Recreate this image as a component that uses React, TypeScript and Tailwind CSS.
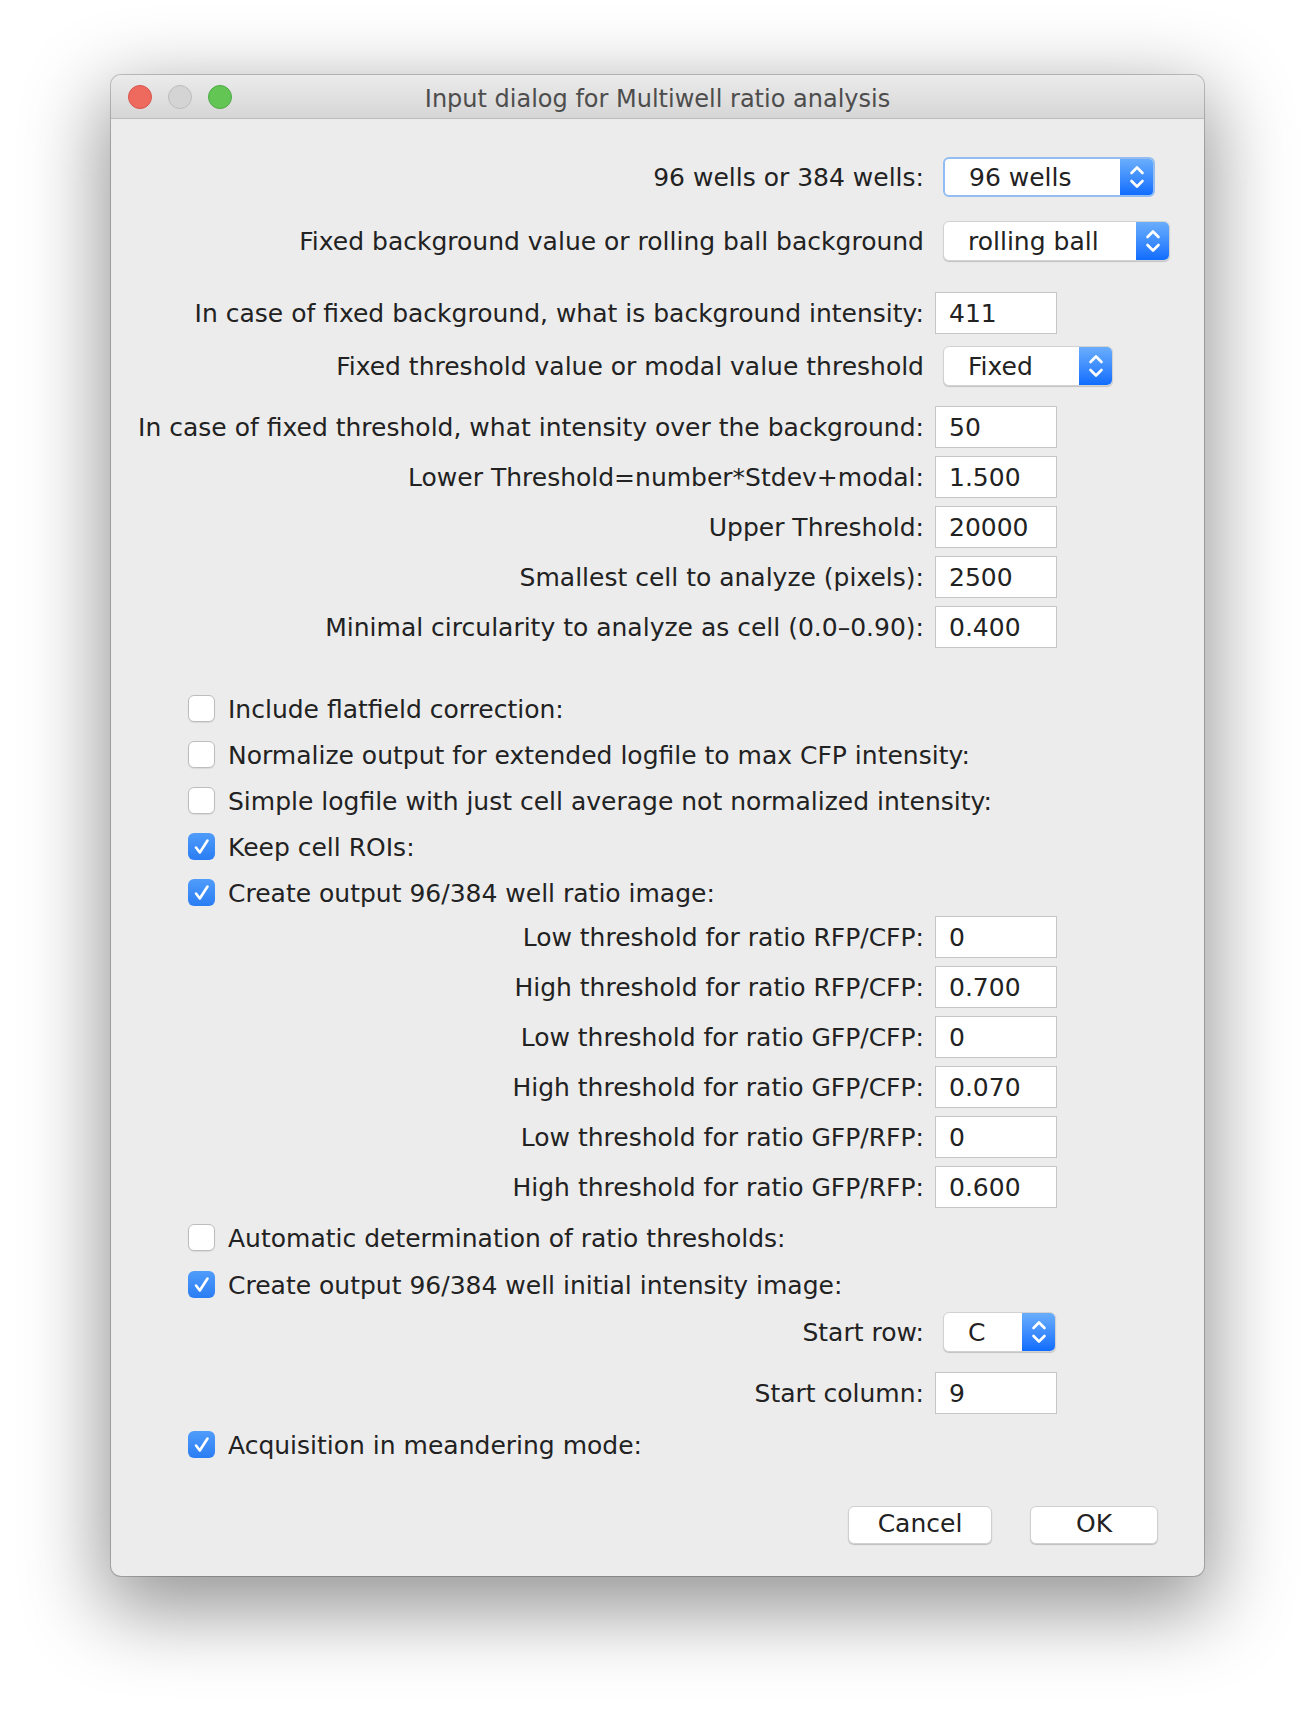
import React from "react";

const font = "font-['DejaVu_Sans',sans-serif]";

function Chevrons() {
  return (
    <svg width="16" height="28" viewBox="0 0 16 28" fill="none">
      <path d="M2.5 10 L8 4.5 L13.5 10" stroke="#fff" strokeWidth="2.6" strokeLinecap="round" strokeLinejoin="round" />
      <path d="M2.5 18 L8 23.5 L13.5 18" stroke="#fff" strokeWidth="2.6" strokeLinecap="round" strokeLinejoin="round" />
    </svg>
  );
}

function Select({ value, width, focused }: { value: string; width: string; focused?: boolean }) {
  return (
    <div
      className={`ml-[8px] flex h-[40px] ${width} items-stretch overflow-hidden rounded-[6px] bg-white ${
        focused
          ? "border-2 border-[#93bcf3]"
          : "border border-[#d2d2d2] shadow-[0_1px_1px_rgba(0,0,0,0.18)]"
      }`}
    >
      <div className="flex flex-1 items-center pl-[24px] pt-[2px] text-[25px] leading-[34px] text-[#222]">{value}</div>
      <div className="flex w-[33px] items-center justify-center bg-gradient-to-b from-[#69adfb] to-[#0d6cff]">
        <Chevrons />
      </div>
    </div>
  );
}

function Field({ value }: { value: string }) {
  return (
    <div className="flex h-[42px] w-[122px] items-center border border-[#c6c6c6] bg-white pl-[13px] pt-[2px] text-[25px] leading-[34px] text-[#222]">
      {value}
    </div>
  );
}

function LabelRow({ label, mt, children }: { label: string; mt: string; children: React.ReactNode }) {
  return (
    <div className={`flex items-center ${mt}`}>
      <div className="w-[824px] whitespace-nowrap pr-[11px] pt-[2px] text-right text-[25px] leading-[34px] text-[#222]">
        {label}
      </div>
      {children}
    </div>
  );
}

function Check({ label, checked, mt }: { label: string; checked?: boolean; mt: string }) {
  return (
    <div className={`flex h-[27px] items-center pl-[77px] ${mt}`}>
      {checked ? (
        <div className="flex h-[27px] w-[27px] items-center justify-center rounded-[6px] bg-gradient-to-b from-[#4f9cfa] to-[#2a7df4]">
          <svg width="27" height="27" viewBox="0 0 27 27" fill="none">
            <path d="M8 14.5 L11.8 19.5 L19.5 7.5" stroke="#fff" strokeWidth="2.6" strokeLinecap="round" strokeLinejoin="round" />
          </svg>
        </div>
      ) : (
        <div className="h-[27px] w-[27px] rounded-[6px] border border-[#bdbdbd] bg-white shadow-[0_1px_1px_rgba(0,0,0,0.08)]" />
      )}
      <div className="ml-[13px] whitespace-nowrap pt-[2px] text-[25px] leading-[34px] text-[#222]">{label}</div>
    </div>
  );
}

export default function App() {
  return (
    <div className={`min-h-[1724px] bg-white pl-[111px] pt-[75px] ${font}`}>
      <div className="flex h-[1501px] w-[1093px] flex-col overflow-hidden rounded-[10px] bg-[#ececec] shadow-[0_0_0_1px_rgba(0,0,0,0.2),0_26px_80px_8px_rgba(0,0,0,0.42)]">
        {/* title bar */}
        <div className="relative flex h-[44px] items-center justify-center border-b border-[#bdbdbd] bg-gradient-to-b from-[#ebebeb] to-[#d6d6d6]">
          <div className="absolute left-[17px] top-[10px] flex gap-[16px]">
            <div className="h-[24px] w-[24px] rounded-full border border-[#d9534b] bg-[#ee6a5f]" />
            <div className="h-[24px] w-[24px] rounded-full border border-[#bcbcbc] bg-[#d4d4d4]" />
            <div className="h-[24px] w-[24px] rounded-full border border-[#4ea944] bg-[#62c554]" />
          </div>
          <div className="pt-[4px] text-[24px] text-[#4d4d4d]">Input dialog for Multiwell ratio analysis</div>
        </div>

        <div className="flex flex-col">
          <LabelRow label="96 wells or 384 wells:" mt="mt-[38px]">
            <Select value="96 wells" width="w-[212px]" focused />
          </LabelRow>
          <LabelRow label="Fixed background value or rolling ball background" mt="mt-[24px]">
            <Select value="rolling ball" width="w-[227px]" />
          </LabelRow>
          <LabelRow label="In case of fixed background, what is background intensity:" mt="mt-[31px]">
            <Field value="411" />
          </LabelRow>
          <LabelRow label="Fixed threshold value or modal value threshold" mt="mt-[12px]">
            <Select value="Fixed" width="w-[170px]" />
          </LabelRow>
          <LabelRow label="In case of fixed threshold, what intensity over the background:" mt="mt-[20px]">
            <Field value="50" />
          </LabelRow>
          <LabelRow label="Lower Threshold=number*Stdev+modal:" mt="mt-[8px]">
            <Field value="1.500" />
          </LabelRow>
          <LabelRow label="Upper Threshold:" mt="mt-[8px]">
            <Field value="20000" />
          </LabelRow>
          <LabelRow label="Smallest cell to analyze (pixels):" mt="mt-[8px]">
            <Field value="2500" />
          </LabelRow>
          <LabelRow label="Minimal circularity to analyze as cell (0.0–0.90):" mt="mt-[8px]">
            <Field value="0.400" />
          </LabelRow>

          <Check label="Include flatfield correction:" mt="mt-[47px]" />
          <Check label="Normalize output for extended logfile to max CFP intensity:" mt="mt-[19px]" />
          <Check label="Simple logfile with just cell average not normalized intensity:" mt="mt-[19px]" />
          <Check label="Keep cell ROIs:" checked mt="mt-[19px]" />
          <Check label="Create output 96/384 well ratio image:" checked mt="mt-[19px]" />

          <LabelRow label="Low threshold for ratio RFP/CFP:" mt="mt-[10px]">
            <Field value="0" />
          </LabelRow>
          <LabelRow label="High threshold for ratio RFP/CFP:" mt="mt-[8px]">
            <Field value="0.700" />
          </LabelRow>
          <LabelRow label="Low threshold for ratio GFP/CFP:" mt="mt-[8px]">
            <Field value="0" />
          </LabelRow>
          <LabelRow label="High threshold for ratio GFP/CFP:" mt="mt-[8px]">
            <Field value="0.070" />
          </LabelRow>
          <LabelRow label="Low threshold for ratio GFP/RFP:" mt="mt-[8px]">
            <Field value="0" />
          </LabelRow>
          <LabelRow label="High threshold for ratio GFP/RFP:" mt="mt-[8px]">
            <Field value="0.600" />
          </LabelRow>

          <Check label="Automatic determination of ratio thresholds:" mt="mt-[16px]" />
          <Check label="Create output 96/384 well initial intensity image:" checked mt="mt-[20px]" />

          <LabelRow label="Start row:" mt="mt-[14px]">
            <Select value="C" width="w-[113px]" />
          </LabelRow>
          <LabelRow label="Start column:" mt="mt-[20px]">
            <Field value="9" />
          </LabelRow>

          <Check label="Acquisition in meandering mode:" checked mt="mt-[17px]" />

          <div className="mt-[48px] flex justify-end gap-[38px] pr-[46px]">
            <button className="h-[38px] w-[144px] rounded-[6px] border border-[#d0d0d0] bg-white pb-[3px] text-[25px] leading-[34px] text-[#222] shadow-[0_1px_1px_rgba(0,0,0,0.2)]">
              Cancel
            </button>
            <button className="h-[38px] w-[128px] rounded-[6px] border border-[#d0d0d0] bg-white pb-[3px] text-[25px] leading-[34px] text-[#222] shadow-[0_1px_1px_rgba(0,0,0,0.2)]">
              OK
            </button>
          </div>
        </div>
      </div>
    </div>
  );
}
